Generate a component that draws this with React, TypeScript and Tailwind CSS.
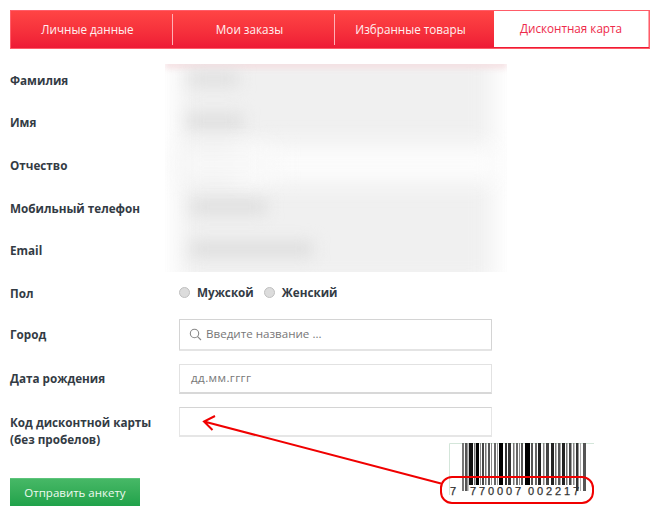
const bars: [number, number, string][] = [
  [462, 2, "#777"], [465, 2, "#555"], [467, 1.5, "#999"], [469, 4, "#111"], [474, 1.5, "#777"], [476, 3, "#000"], [480, 1, "#888"], [482, 2, "#444"],
  [485, 1.5, "#777"], [488, 2, "#555"], [491, 1, "#888"], [494, 2, "#666"], [497, 1, "#999"], [499, 4, "#000"], [505, 2, "#333"],
  [508, 3, "#333"], [513, 1.5, "#777"], [516, 2, "#666"], [519, 1, "#888"], [521, 2, "#555"], [525, 5, "#000"], [531, 2, "#555"],
  [535, 2, "#666"], [538, 3, "#222"], [543, 1.5, "#888"], [546, 3, "#444"], [551, 3, "#222"], [555, 1.5, "#777"], [558, 2.5, "#555"],
  [562, 3, "#222"], [566, 1.5, "#777"], [569, 2.5, "#444"], [573, 1.5, "#888"], [576, 2.5, "#333"], [580, 1, "#aaa"], [583, 3, "#555"],
];

const labelClass = "text-[11.7px] font-bold text-[#333b44] leading-[17px]";
const tabClass = "h-[31px] flex items-center justify-center pr-[8px] text-[11.7px] text-[#fff1f1]";

function Row({ label, children, h }: { label: string; children?: React.ReactNode; h: string }) {
  return (
    <div className={`flex items-center ${h}`}>
      <div className={`w-[169px] shrink-0 ${labelClass}`}>{label}</div>
      {children}
    </div>
  );
}

export default function App() {
  return (
    <div className="relative w-[660px] h-[513px] overflow-hidden bg-white font-['Open_Sans',sans-serif]">
      <div className="px-[10px] pt-[10px]">
        <nav className="flex h-[39px] w-[640px] bg-gradient-to-b from-[#ff4444] to-[#ee1a35] border border-[#ff5c68]">
          <div className="w-[483px] flex items-center">
            <div className={`${tabClass} w-[162px] border-r border-[#ffb0b6]`}>Личные данные</div>
            <div className={`${tabClass} w-[162px] border-r border-[#ffb0b6]`}>Мои заказы</div>
            <div className={`${tabClass} flex-1`}>Избранные товары</div>
          </div>
          <div className="flex-1 flex items-center justify-center bg-white text-[11.7px] text-[#ee2a4a] border-r border-[#ffa6ad] mb-px">
            Дисконтная карта
          </div>
        </nav>

        <div className="flex mt-[15px]">
          <div className="w-[155px] -mt-[5px]">
            {["Фамилия", "Имя", "Отчество", "Мобильный телефон", "Email"].map((l) => (
              <div key={l} className={`h-[42.6px] flex items-center ${labelClass}`}>{l}</div>
            ))}
          </div>
          <div className="relative w-[342px] h-[208px] overflow-hidden">
            <div className="absolute inset-x-[14px] -top-[14px] -bottom-[14px] bg-[#f0f0f0] blur-[11px]" />
            <div className="absolute left-0 right-0 -top-[3px] h-[7px] bg-[#f4dcdf] blur-[3px]" />
            <div className="absolute left-[24px] top-[8px] w-[50px] h-[14px] bg-[#dfdfdf] blur-[8px]" />
            <div className="absolute left-[22px] top-[50px] w-[56px] h-[14px] bg-[#dddddd] blur-[8px]" />
            <div className="absolute left-[70px] right-[4px] top-[82px] h-[36px] bg-[#fdfdfd] blur-[12px]" />
            <div className="absolute left-[10px] w-[100px] top-[84px] h-[32px] bg-[#f8f8f8] blur-[12px]" />
            <div className="absolute left-[26px] top-[136px] w-[76px] h-[14px] bg-[#dddddd] blur-[8px]" />
            <div className="absolute left-[26px] top-[178px] w-[122px] h-[14px] bg-[#dcdcdc] blur-[8px]" />
          </div>
        </div>

        <div>
          <Row label="Пол" h="h-[42px]">
            <div className="flex items-center text-[11.7px] font-bold text-[#333b44]">
              <span className="w-[11px] h-[11px] rounded-full border border-[#c0c0c0] bg-[#dcdcdc]" />
              <span className="ml-[7px]">Мужской</span>
              <span className="ml-[10px] w-[11px] h-[11px] rounded-full border border-[#c0c0c0] bg-[#dcdcdc]" />
              <span className="ml-[7px]">Женский</span>
            </div>
          </Row>
          <Row label="Город" h="h-[41px]">
            <div className="w-[313px] h-[32px] flex items-center border border-[#d4d4d4] border-b-2 border-b-[#e4e4e4] rounded-[1px] bg-white px-[9px] text-[11.6px] text-[#777]">
              <svg width="13" height="13" viewBox="0 0 13 13" fill="none" stroke="#888" strokeWidth="1.1">
                <circle cx="5.5" cy="5.5" r="4.2" />
                <path d="M8.6 8.6 12 12" />
              </svg>
              <span className="ml-[4px]">Введите название ...</span>
            </div>
          </Row>
          <Row label="Дата рождения" h="h-[47px]">
            <div className="w-[313px] h-[30px] flex items-center border border-[#e2e2e2] border-b-2 border-b-[#d8d8d8] bg-white px-[11px] text-[11.6px] tracking-[0.4px] text-[#777]">дд.мм.гггг</div>
          </Row>
          <div className="flex items-start mt-[11px]">
            <div className={`w-[169px] shrink-0 pt-[1px] ${labelClass}`}>Код дисконтной карты<br />(без пробелов)</div>
            <div className="w-[313px] h-[30px] border border-[#e6e6e6] border-t-[#d4d4d4] border-b-2 bg-white -mt-[6px]" />
          </div>
          <button className="mt-[30px] w-[130px] h-[28px] flex items-center justify-center bg-gradient-to-b from-[#46b866] to-[#1fa24a] border-t border-[#5cc47a] text-[11.5px] text-[#eefaf0]">
            Отправить анкету
          </button>
        </div>
      </div>

      {/* Наложенная аннотация со штрихкодом */}
      <svg className="absolute left-0 top-0 pointer-events-none" width="660" height="513" viewBox="0 0 660 513">
        <path d="M449.5 495V443.5H594" fill="none" stroke="#d4e6da" strokeWidth="1" />
        {bars.map(([x, w, c], i) => (
          <rect key={x} x={x} y={443} width={w} height={i < 3 || i > 32 ? 48 : 42} fill={c} />
        ))}
        <text x="450" y="495" fontSize="11" fontFamily="'Liberation Sans', sans-serif" fill="#333" stroke="#333" strokeWidth="0.25">7</text>
        <text x="470" y="495" fontSize="11" letterSpacing="2.9" fontFamily="'Liberation Sans', sans-serif" fill="#333" stroke="#333" strokeWidth="0.25">770007</text>
        <text x="528" y="495" fontSize="11" letterSpacing="2.9" fontFamily="'Liberation Sans', sans-serif" fill="#333" stroke="#333" strokeWidth="0.25">002217</text>
        <rect x="441" y="477" width="152" height="26" rx="11" fill="none" stroke="#f00000" strokeWidth="2" />
        <path d="M441 483.5 204 421.5M215 416 204 421.5 212.5 430" fill="none" stroke="#f00000" strokeWidth="2" />
      </svg>
    </div>
  );
}
